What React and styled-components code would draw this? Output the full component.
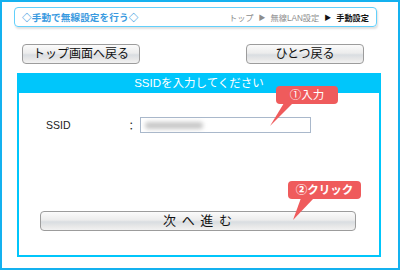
import React from 'react';
import styled, { createGlobalStyle } from 'styled-components';

const GlobalStyle = createGlobalStyle`
  body {
    margin: 0;
    background: #fff;
    font-family: "Liberation Sans", "Noto Sans CJK JP", sans-serif;
  }
`;

const Frame = styled.div`
  width: 400px;
  height: 270px;
  box-sizing: border-box;
  border: 2px solid #14b1ef;
  padding: 5px 0 0 12px;
`;

const TitleBar = styled.div`
  width: 363px;
  height: 20px;
  box-sizing: border-box;
  border: 1px solid #62d0fb;
  border-radius: 4px;
  box-shadow: 1px 2px 2px rgba(0, 0, 0, 0.12);
  display: flex;
  align-items: center;
  justify-content: space-between;
  padding: 0 7px 0 7px;
`;

const Title = styled.span`
  font-size: 9.6px;
  font-weight: 700;
  color: #3a9ae0;
  letter-spacing: 0.1px;
`;

const Crumbs = styled.span`
  font-size: 8.2px;
  color: #8c8c8c;
  display: flex;
  gap: 5px;
  align-items: center;
`;

const Crumb = styled.span`
  color: ${(p) => (p.$current ? '#111' : '#8c8c8c')};
  font-weight: ${(p) => (p.$current ? 700 : 400)};
`;

const Arrow = styled.span`
  color: ${(p) => (p.$dark ? '#111' : '#8c8c8c')};
  font-size: 7px;
`;

const ButtonRow = styled.div`
  display: flex;
  justify-content: space-between;
  width: 342px;
  margin: 17px 0 0 8px;
`;

const Button = styled.button`
  width: ${(p) => p.$w}px;
  height: 20px;
  box-sizing: border-box;
  border: 1px solid #9c9c9c;
  border-radius: 4px;
  background: linear-gradient(#fbfbfb 0%, #ececec 45%, #d9dde1 55%, #e8e8e8 80%, #f2f2f2 100%);
  font-family: "Liberation Sans", "Noto Sans CJK JP", sans-serif;
  font-size: ${(p) => p.$fs || 12}px;
  color: #111;
  padding: 0;
  line-height: 18px;
  letter-spacing: ${(p) => p.$ls || 0}px;
`;

const Panel = styled.div`
  position: relative;
  width: 364px;
  height: 184px;
  box-sizing: border-box;
  margin: 9px 0 0 3px;
  border: 2px solid #00c6fb;
  display: flex;
  flex-direction: column;
`;

const PanelHead = styled.div`
  height: 19px;
  margin: -1px -1px 0;
  background: #00c6fb;
  color: #fff;
  font-size: 11.5px;
  text-align: center;
  line-height: 19px;
`;

const FieldRow = styled.div`
  display: flex;
  align-items: center;
  margin: 24px 0 0 27px;
  height: 16px;
`;

const Label = styled.span`
  width: 80px;
  font-size: 10.5px;
  color: #222;
`;

const Colon = styled.span`
  width: 14px;
  font-size: 10.5px;
  color: #222;
`;

const Input = styled.div`
  width: 171px;
  height: 16px;
  box-sizing: border-box;
  border: 1px solid #a9b8cb;
  display: flex;
  align-items: center;
  padding-left: 4px;
`;

const Blurred = styled.span`
  display: block;
  width: 58px;
  height: 7px;
  background: #c8c8c8;
  filter: blur(2px);
  border-radius: 3px;
`;

const NextWrap = styled.div`
  display: flex;
  justify-content: center;
  margin-top: 78px;
  padding-right: 2px;
`;

const Callout = styled.div`
  position: absolute;
  left: ${(p) => p.$x}px;
  top: ${(p) => p.$y}px;
  width: ${(p) => p.$w}px;
  height: 18px;
  background: #ef5b5c;
  border-radius: 4px;
  color: #fff;
  font-size: 11.5px;
  font-weight: ${(p) => (p.$bold ? 700 : 400)};
  line-height: 18px;
  text-align: center;
`;

const Tail = styled.svg`
  position: absolute;
  left: 0;
  top: 0;
  overflow: visible;
`;

export default function App() {
  return (
    <>
      <GlobalStyle />
      <Frame>
        <TitleBar>
          <Title>◇手動で無線設定を行う◇</Title>
          <Crumbs>
            <Crumb>トップ</Crumb>
            <Arrow>▶</Arrow>
            <Crumb>無線LAN設定</Crumb>
            <Arrow $dark>▶</Arrow>
            <Crumb $current>手動設定</Crumb>
          </Crumbs>
        </TitleBar>
        <ButtonRow>
          <Button $w={118}>トップ画面へ戻る</Button>
          <Button $w={118}>ひとつ戻る</Button>
        </ButtonRow>
        <Panel>
          <PanelHead>SSIDを入力してください</PanelHead>
          <FieldRow>
            <Label>SSID</Label>
            <Colon>：</Colon>
            <Input>
              <Blurred />
            </Input>
          </FieldRow>
          <NextWrap>
            <Button $w={316} $fs={13} $ls={1}>次 へ 進 む</Button>
          </NextWrap>
          <Callout $x={257} $y={11} $w={62}>
            <Tail width="1" height="1">
              <polygon points="8,17 17,17 -6,40" fill="#ef5b5c" />
            </Tail>
            ①入力
          </Callout>
          <Callout $x={269} $y={106} $w={73} $bold>
            <Tail width="1" height="1">
              <polygon points="13,17 26,17 5,39" fill="#ef5b5c" />
            </Tail>
            ②クリック
          </Callout>
        </Panel>
      </Frame>
    </>
  );
}
